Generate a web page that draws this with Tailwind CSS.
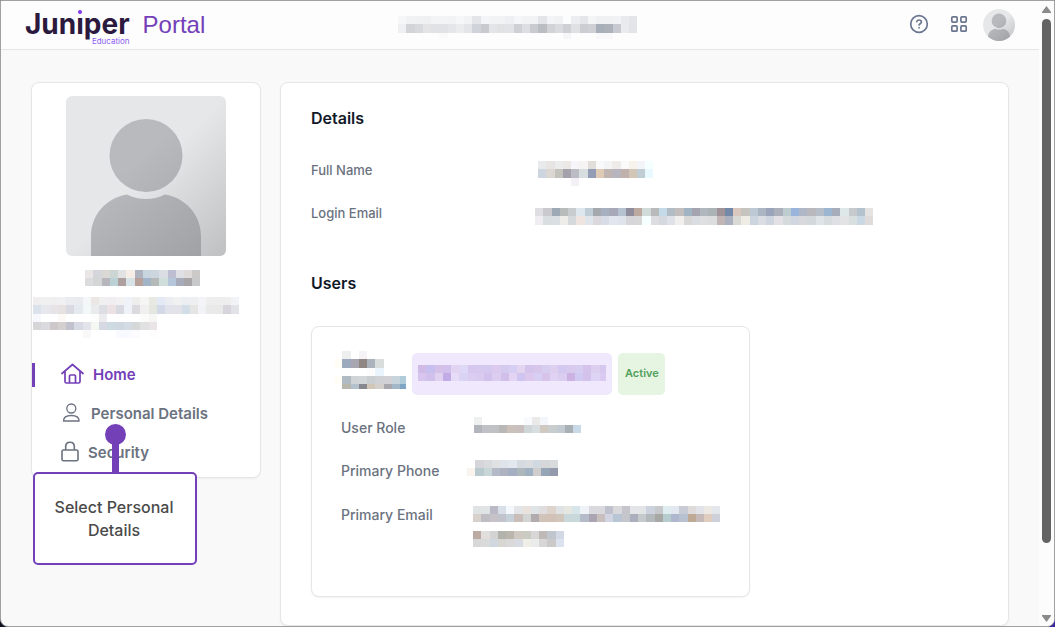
<!DOCTYPE html>
<html lang="en">

<head>
  <meta charset="UTF-8">
  <meta name="viewport" content="width=device-width, initial-scale=1.0">
  <title>Juniper Education Portal</title>
  <script src="https://cdn.jsdelivr.net/npm/@tailwindcss/browser@4"></script>
</head>

<body class="bg-linear-to-r from-[#10131f] to-[#3b2a9c] font-['Inter',sans-serif]">
  <div class="flex h-screen overflow-hidden rounded-b-lg border border-[#a0a0a0] bg-[#f9f9f9]">
    <div class="flex min-w-0 flex-1 flex-col">

      <!-- Header -->
      <header class="grid h-[49px] shrink-0 grid-cols-[1fr_auto_1fr] items-center border-b border-[#e5e5e7] bg-[#fdfdfd] px-6">
        <a href="#" class="flex items-center gap-[13px]">
          <span class="relative pb-0.5 text-[28px] leading-[42px] font-bold text-[#2b1a3d]">Jun<span class="relative">i<span class="absolute top-[4px] left-0 h-[7px] w-2 bg-[#fdfdfd]"></span><span class="absolute top-[3px] left-[2px] size-[4px] rounded-full bg-[#7c3aed]"></span></span>per<span class="absolute right-0 bottom-px text-[8px] leading-[10px] font-normal text-[#8b5cf6]">Education</span></span>
          <span class="font-['Liberation_Sans',sans-serif] text-2xl leading-[44px] text-[#7340b8]">Portal</span>
        </a>
        <svg class="mt-[5px] mr-[5px] h-[23px] w-[239px]" data-mosaic="f6f7f9 f1f2f4 f0f1f3 eff0f2 f3f4f5 f3f4f5 f2f3f5 f6f7f8 f2f3f5 e3e5e9 f4f5f7 f2f3f5 f2f3f5 eeeff2 f5f6f8 f2f3f5 f2f3f5 e4e5e8 f3f4f5 f1f2f4 fdfdfd ebedf0 e4e6ea f4f5f6 f0f1f3 f0f1f3 f1f2f4 e9eaed e3e5e8|eff0f2 d3d4d7 d8d9dc e4e4e6 e1e2e4 e1e2e6 e5e6ea ebecee e4e5e9 d0d3d9 c8cad0 e4e5e7 e1e2e4 e2e3e6 cfd0d5 dddee3 c8cbd0 babdc1 d1d3d7 dadbde cdd0d5 e0e1e5 cccdd3 ced0d5 a9afb8 adb2ba c8cad1 e9ebed e2e4e7|- - - - - fafafb - - - - - - - - - - - - - - f6f6f9 - - - f8f8fa f8f8fa - - -"></svg>
        <div class="flex items-center justify-end gap-3">
          <div class="flex items-center gap-4 pb-0.5">
            <button type="button" aria-label="Help">
              <svg class="size-6" viewBox="0 0 24 24" fill="none" stroke="#6b7690" stroke-width="1.7" stroke-linecap="round" stroke-linejoin="round">
                <circle cx="12" cy="12" r="8.3" />
                <path d="M9.8 9.6c.3-1 1.200-1.600 2.300-1.600 1.300 0 2.300.8 2.300 2 0 1.600-2.300 1.700-2.300 3M12.100 15.700v.1" />
              </svg>
            </button>
            <button type="button" aria-label="Apps">
              <svg class="size-6" viewBox="0 0 24 24" fill="none" stroke="#6b7690" stroke-width="1.7">
                <rect x="4.800" y="4.800" width="5.300" height="5.300" rx="1" />
                <rect x="13.900" y="4.800" width="5.300" height="5.300" rx="1" />
                <rect x="4.800" y="13.900" width="5.300" height="5.300" rx="1" />
                <rect x="13.900" y="13.900" width="5.300" height="5.300" rx="1" />
              </svg>
            </button>
          </div>
          <button type="button" aria-label="Account" class="size-8 overflow-hidden rounded-full">
            <svg class="size-8" viewBox="0 0 160 160"><use href="#avatar" /></svg>
          </button>
        </div>
      </header>

      <!-- Main Content -->
      <main class="flex min-h-0 flex-1 items-start gap-[19px] px-[30px] pt-8">

        <!-- Profile card -->
        <aside class="relative w-[230px] shrink-0 rounded-lg border border-[#e5e5ea] bg-white pt-[13px] pb-3 shadow-xs">
          <svg class="mx-auto size-40 rounded-md" viewBox="0 0 160 160" role="img" aria-label="Profile picture">
            <defs>
              <linearGradient id="avatar-bg" x1="0" y1="0" x2="1" y2="1">
                <stop offset=".5" stop-color="#e6e7e9" />
                <stop offset="1" stop-color="#bfc0c2" />
              </linearGradient>
              <linearGradient id="avatar-fg" gradientUnits="userSpaceOnUse" x1="30" y1="30" x2="140" y2="160">
                <stop offset=".3" stop-color="#b9babd" />
                <stop offset="1" stop-color="#a0a1a4" />
              </linearGradient>
            </defs>
            <g id="avatar">
              <rect width="160" height="160" fill="url(#avatar-bg)" />
              <circle cx="80" cy="59.500" r="36.500" fill="url(#avatar-fg)" />
              <path d="M25 160v-20c0-21 15-38 36-41.500 12 6 26 6 38 0 21 3.500 36 20.500 36 41.500v20z" fill="url(#avatar-fg)" />
            </g>
          </svg>
          <svg class="mt-[14px] ml-[53px] h-4 w-[115px]" data-mosaic="eae6e6 d5d6db d9d8d5 cbd5d1 e0e2e3 f7ede7 adb4c0 c9d5de cbd6df dadee4 bdbed1 dfe0e3 dfdada cccac9|dbdcdd d4d6d5 b8b6bd bcd1d6 aea09f d8e3e8 b8a19a a1b4c8 b5b9b8 cfdddb b5c5da a8acba a8a5a8 c7c9cb"></svg>
          <svg class="mt-[11px] ml-px h-[41px] w-[206px]" data-mosaic="f0eeee f1f0f0 efefef f0f0f2 ebecef e9ebee f3f7f8 ebe7e5 f0f0f1 f0eef0 f2f2f3 eff2f8 efeeef f5f5f3 e8e9e3 e4eaf5 ebedf2 f0f1f0 ebeff2 eeeff0 f4f4f8 eeeeef ededee eeeeef f2f3f7|dce2eb e6e8ee e6e4e7 e6e2e2 d9d9e2 e4eaf0 f2f7f8 eaebec dddde4 ece2e5 d9d9e2 eff2f8 dcdade f0f0ee e4e7e0 d3d9e6 e2e3ea e2e2e8 d2dde7 e5e5e3 f2f3f7 e9e9ea e9e9ea d7d4dc e2e3e8|f6f8fd - - fcf9f7 - - - fdfdfd ececee - - - - fbfbfa f6f6f4 - - - - - - - - - -|d6d6d8 d9d9de cdc8c9 d5d0d0 c2c2ce d7dae4 e3e4ea f5f7f3 d6d8e2 cfdbe3 cfd7e0 d4dbe2 d6d8d7 e1e0e2 ebe4e6|- - - - - - f8f8f8 - - - f8faff f8faff fcfcfe - fdfdfd"></svg>

          <nav class="mt-[25px] flex flex-col gap-[15px] text-[15px] leading-6 font-semibold text-[#6b7280]">
            <a href="#" class="flex items-center gap-[9px] border-l-3 border-[#7340b8] pl-[26px] text-[#7340b8]">
              <svg class="h-6 w-[23px]" viewBox="0 0 23 24" fill="none" stroke="currentColor" stroke-width="1.7" stroke-linecap="round" stroke-linejoin="round">
                <path d="M1 10.500 11.500 1.500 22 10.500M4 8.500v10c0 .8.6 1.500 1.500 1.500h12c.9 0 1.500-.7 1.500-1.500v-10M8.500 20v-7c0-.5.4-1 1-1h4c.6 0 1 .5 1 1v7" />
              </svg>
              Home
            </a>
            <a href="#" class="flex items-center gap-[9px] pl-[29px]">
              <svg class="h-6 w-[21px]" viewBox="0 0 21 24" fill="none" stroke="currentColor" stroke-width="1.3" stroke-linejoin="round">
                <circle cx="10.300" cy="6.500" r="4.500" />
                <path d="M2.500 19c0-3.500 3-5.500 7.800-5.500s7.800 2 7.800 5.500z" />
              </svg>
              Personal Details
            </a>
            <a href="#" class="flex items-center gap-[9px] pl-[29px]">
              <svg class="h-6 w-[18px]" viewBox="0 0 18 24" fill="none" stroke="currentColor" stroke-width="1.6">
                <rect x="1" y="9" width="16" height="10.800" rx="1.500" />
                <path d="M4.700 9V5.500C4.700 3 6.500 1.200 9 1.200s4.300 1.800 4.300 4.300V9" />
              </svg>
              Security
            </a>
          </nav>

          <!-- Callout -->
          <div class="absolute top-[341px] left-px flex w-[164px] flex-col items-center">
            <span class="size-[21px] rounded-full bg-[#7340b8]"></span>
            <span class="-mt-1 h-[31px] w-[7px] bg-[#7340b8]"></span>
            <p class="w-full rounded-[5px] border-2 border-[#7340b8] bg-white pt-[22px] pr-[18px] pb-[21px] pl-4 text-center text-base leading-[23px] font-medium text-[#4a4a4a]">Select Personal Details</p>
          </div>
        </aside>

        <!-- Details card -->
        <section class="h-full min-w-0 flex-1 rounded-lg border border-[#e5e5ea] bg-white px-[30px] pt-[23px] shadow-xs">
          <h2 class="text-base leading-6 font-semibold text-[#111827]">Details</h2>
          <dl class="mt-[19px] text-[13px] leading-5 font-medium text-[#6b7280]">
            <div class="flex h-[43px] items-start pt-[11px]">
              <dt class="w-[224px] shrink-0">Full Name</dt>
              <dd class="pt-px pl-[3px]"><svg class="h-[25px] w-[115px]" data-mosaic="e8eaeb e8e4e4 ebedec ebe8e5 f6f5f9 f5f4f2 e1ddd8 f9f9fa f3f4f5 efebe8 fafafb f7f3ec f2f4f7 f5ffff|cdd5e0 dbd8d3 c4c2bd a5a1ac bbbcc4 d8dddf 929cb4 dfcab6 bfb6b2 b8b5be c0b1ac d2c7b7 c0cdd2 e8faff|- - - - f3f1f5 - - - - - - - - -"></svg></dd>
            </div>
            <div class="flex h-[43px] items-start pt-[11px]">
              <dt class="w-[224px] shrink-0">Login Email</dt>
              <dd class="pt-[5px]"><svg class="h-[17px] w-[338px]" data-mosaic="dfdfe1 cacace 9da9b5 b8bdbb c9cccf dfe7ee c1cdd6 a5a8ad a6b0c0 a7a9b8 b6c2d0 908e9c bca99f d1dbda b9bbbb c5dae8 b1bcc5 c2bebe a1b4c3 a3a4b0 b1b8bd acb3b6 9f9298 7488a7 dac7be c5c4be bdcad5 abb5c3 9aa4ba abb0ba bccccf 9bb4dc afb6c5 b8b8bd b6bec9 9cb5d0 a8adbb dfe8e8 c6cacb b3c2cc e5e3e2|efedef d9dfe1 d9dfe2 efede9 d5d9dc efe4df dfe5ea dad8dd d7dce7 e2e7ef dfe4ea d5d5da d8d7d7 f6ffff dddddf d5d8de e0e2e9 f1f0ef d9d8d8 d9dce1 dddfe1 dcdddf c0b4b4 abb0be d9d9d6 efece5 ccd4e0 dadde3 cfd4e1 e3e1e4 d5dbdc d1d6e1 d9d9dd d2d8dc dfe4e8 d7dcdf dfe0e6 e3e3e5 d9dede cad8e3 dfdbda"></svg></dd>
            </div>
          </dl>

          <h2 class="mt-9 text-base leading-6 font-semibold text-[#111827]">Users</h2>
          <article class="mt-[31px] max-w-[439px] rounded-lg border border-[#e5e5ea] bg-white px-[29px] pt-[26px] pb-[49px] shadow-xs">
            <div class="flex h-[42px] items-start gap-[6px]">
              <svg class="-mt-0.5 -ml-[7px] h-[38px] w-[72px] shrink-0" data-mosaic="- ecefed - f5f3f5|fffdf6 9da9bd a8a6b1 908683 adb3bd d9dddb|- fefefe - - fdfbfb eaf4fc|fffdf6 b0bac2 d0d4d6 d2d6d8 cbced1 cfd1d5 d2d2d6 c8d4db b0cbd9|- b7b7ad b2c1cc 87878f d1c6b8 d3cfcb a8a7ad a2b8c8 7fa5c6"></svg>
              <span class="flex h-full w-[200px] items-start rounded-[5px] bg-[#f0e8fd] px-[6px] pt-3">
                <svg class="h-4 w-full" data-mosaic="d0bae6 c6bff0 d5c1e8 d0c0eb e2d4f1 ded7f6 d5c7ed d6c9ee d5c8ef dccaee d4c9ef d6cef3 e3d4f0 d4c3eb d7c5ea d7cdf1 dfcfef d3c8f0 d8caee d6cdf1 d4c2eb dbceef d6c7ef|d7c5ed d0c0eb e0d1f0 c1ace6 e6dcf8 dbd3f3 dacdf1 d9caef d2c1ec dccdf0 d1bee9 e2d4f2 cfc5f0 dbc8ec d7cff3 d9c4e9 dfd2f3 dbcdef ccb2e3 d0caf2 d4c1ec dcd5f5 dac9f0"></svg>
              </span>
              <span class="flex h-full items-center rounded-[5px] bg-[#e6f4e2] pr-[6px] pb-0.5 pl-[7px] text-[11px] leading-4 font-semibold text-[#4fa05a]">Active</span>
            </div>
            <dl class="mt-[23px] flex flex-col gap-[23px] text-sm leading-5 font-medium text-[#6b7280]">
              <div class="flex h-5">
                <dt class="w-[132px] shrink-0">User Role</dt>
                <dd class="-mt-px pl-px"><svg class="h-4 w-[107px]" data-mosaic="eff1f1 - - - - - f9fafd ece9e9 f3f6fa|b2b6bc bec2c6 bfc1c4 b9b8b7 cbc1ba c9bfbf d0d6d8 d8dddf d0c9c2 cacdcd c0cad0 a9b0b5 cad9e7"></svg></dd>
              </div>
              <div class="flex h-5">
                <dt class="w-[126px] shrink-0">Primary Phone</dt>
                <dd class="-mt-px"><svg class="h-4 w-[91px]" data-mosaic="- d5d5da dadbdc e0e1e2 dfe4ea e3e8ef d5dae0 dbdcdf d0d8e0 d5d7db d9dadb|faf4ee b8cacd c9d6d7 b4bac7 afb3bf a5afc2 aeb7bc a0b1c1 cfcdcd 96a5b6 949aac"></svg></dd>
              </div>
              <div class="flex pt-px">
                <dt class="w-[132px] shrink-0">Primary Email</dt>
                <dd class="flex flex-col gap-[9px] pt-px">
                  <svg class="h-4 w-[247px]" data-mosaic="e0e3e4 e1e4e5 bbb9c5 d8dfe8 f4f8fc e4e5e8 e9e1dc dfe4e7 dfddde ddd5cd dfe3e6 e6e7e1 d8e6ec eff2f7 dadade dadade bfc1cd d9d9dc c6c5cc e4e5e8 e2e4e5 ccd3de c8c9cc dfecf0 e2e7f0 c9ccd5 dfdbda e2e3e8 ece9e4 e4e7eb|d8d0ca bfbec5 c7c1c8 c2c4cd c6d0d9 c9beb9 d2d5d3 b1abad d1c3b9 d2c1b7 d0c6bc cad8dc c9d8db b6bbca aaa5b1 c8bfbe d1d4e1 b8c5d5 c4c6cb abaebd c4cacc b4b9bb a8a8a5 b7cccf afb7cf b8c1d0 bea995 c5bab7 dfcdc0 ced1d9"></svg>
                  <svg class="h-4 w-[91px]" data-mosaic="bbaba2 e2dedb d3d3d3 b3b3ad bab5ad d0c9c2 cacbc2 d9d6d8 bfb9b7 c0c5ce d2d8e4|d9d8d8 d9dbdb d1d7de d7d6d0 dbd8da d8dbe2 efefe7 e9eceb d7d7d7 cbcac9 dce3ef"></svg>
                </dd>
              </div>
            </dl>
          </article>
        </section>
      </main>
    </div>

    <!-- Scrollbar -->
    <div class="flex w-[15px] shrink-0 flex-col items-center bg-[#fcfcfc] pt-[5px] pb-1" aria-hidden="true">
      <svg class="h-[7px] w-[9px]" viewBox="0 0 9 7" fill="#8a8a8a"><path d="M4.500 0 9 6v1H0V6z" /></svg>
      <div class="flex-1 pt-[6px]">
        <div class="h-[88%] w-[9px] rounded-full bg-[#636363]"></div>
      </div>
      <svg class="h-[7px] w-[9px]" viewBox="0 0 9 7" fill="#8a8a8a"><path d="M4.500 7 9 1V0H0v1z" /></svg>
    </div>
  </div>

  <script>
    // Draws redacted values as blocks: rows split by "|", cells by spaces, "-" is empty
    const cell = 8.25;
    document.querySelectorAll('svg[data-mosaic]').forEach(function (svg) {
      svg.setAttribute('shape-rendering', 'crispEdges');
      svg.dataset.mosaic.split('|').forEach(function (row, y) {
        row.split(' ').forEach(function (color, x) {
          if (color === '-') return;
          const rect = document.createElementNS('http://www.w3.org/2000/svg', 'rect');
          rect.setAttribute('x', x * cell);
          rect.setAttribute('y', y * cell);
          rect.setAttribute('width', cell);
          rect.setAttribute('height', cell);
          rect.setAttribute('fill', '#' + color);
          svg.appendChild(rect);
        });
      });
    });
  </script>
</body>

</html>
